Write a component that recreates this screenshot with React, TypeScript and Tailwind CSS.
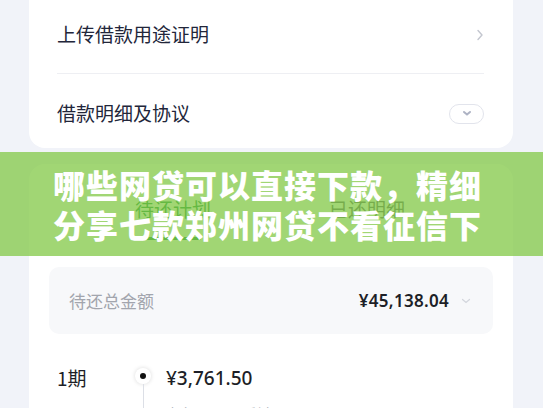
import React from "react";

const font = { fontFamily: '"Noto Sans CJK SC", "Noto Sans", sans-serif' };
const latin = { fontFamily: '"Noto Sans", "Noto Sans CJK SC", sans-serif' };

export default function App() {
  return (
    <div
      className="relative w-[543px] h-[408px] overflow-hidden bg-[#f1f3f9]"
      style={font}
    >
      <div className="flex flex-col pl-[29px] pr-[30px]">
        {/* Card 1 */}
        <div className="bg-white rounded-b-[16px] mt-[-20px] pl-[28px] pr-[29px] pt-[20px]">
          <div className="h-[74px] flex items-center justify-between pb-[4px] border-b border-[#eeeff3]">
            <span className="text-[19px] text-[#22263a]">上传借款用途证明</span>
            <svg width="8" height="12" viewBox="0 0 8 12">
              <path d="M2 1.5 L6 6 L2 10.5" fill="none" stroke="#c3c6cf" strokeWidth="1.4" strokeLinecap="round" strokeLinejoin="round" />
            </svg>
          </div>
          <div className="h-[74px] flex items-center justify-between pt-[5px]">
            <span className="text-[19px] text-[#22263a]">借款明细及协议</span>
            <div className="w-[35px] h-[20px] rounded-full border border-[#e2e4ec] flex items-center justify-center">
              <svg width="10" height="7" viewBox="0 0 10 7">
                <path d="M2 2 L5 4.6 L8 2" fill="none" stroke="#aeb3c4" strokeWidth="2" strokeLinecap="round" strokeLinejoin="round" />
              </svg>
            </div>
          </div>
        </div>

        {/* Card 2 */}
        <div className="bg-white rounded-t-[16px] mt-[16px] h-[300px] flex flex-col">
          <div className="flex h-[81px] pt-[32px]">
            <div className="w-[76px] ml-[106px] flex flex-col items-center">
              <span className="text-[19px] text-[#0c8a3a] leading-[26px] whitespace-nowrap">待还计划</span>
              <div className="w-[56px] h-[3px] rounded-full bg-[#0c8a3a] mt-[15px]" />
            </div>
            <div className="w-[76px] ml-[118px] flex flex-col items-center">
              <span className="text-[19px] text-[#555a60] leading-[26px] whitespace-nowrap">已还明细</span>
            </div>
          </div>
          <div className="mx-[20px] mt-[22px] h-[67px] rounded-[10px] bg-[#f7f8fa] flex items-center justify-between pl-[20px] pr-[22px]">
            <span className="text-[17px] text-[#a2a5ad]">待还总金额</span>
            <div className="flex items-center gap-[12px]">
              <span className="text-[17px] font-semibold text-[#1d1f27] tracking-[0.3px]" style={latin}>¥45,138.04</span>
              <svg width="10" height="6" viewBox="0 0 10 6">
                <path d="M1.5 1.5 L5 4.5 L8.5 1.5" fill="none" stroke="#d3d6dd" strokeWidth="1.2" strokeLinecap="round" />
              </svg>
            </div>
          </div>
          <div className="flex mt-[31px] pl-[28px]">
            <div className="w-[72px] flex flex-col">
              <span className="text-[19px] text-[#1d1f27] leading-[26px]">1期</span>
              <span className="text-[13px] text-[#b0b3bb] mt-[14px] leading-[16px]">04/03/22</span>
            </div>
            <div className="w-[28px] flex flex-col items-center">
              <div className="w-[16px] h-[16px] mt-[3px] rounded-full bg-white shadow-[0_0_4px_rgba(0,0,0,0.15)] flex items-center justify-center">
                <div className="w-[6px] h-[6px] rounded-full bg-[#111]" />
              </div>
              <div className="w-px h-[40px] bg-[#dcdfe6]" />
            </div>
            <div className="flex flex-col pl-[9px]">
              <span className="text-[19px] font-medium text-[#1d1f27] leading-[26px]" style={latin}>¥3,761.50</span>
              <span className="text-[13px] text-[#b0b3bb] mt-[14px] leading-[16px]">本金 3,500.00 利息 261.50</span>
            </div>
          </div>
        </div>
      </div>

      {/* Banner overlay */}
      <div className="absolute left-0 top-[152px] w-[543px] h-[104px] bg-[rgba(130,200,70,0.75)] flex flex-col justify-center pl-[53px]">
        <div className="text-white text-[32px] font-black leading-[40px] tracking-[1px] whitespace-nowrap">哪些网贷可以直接下款，精细</div>
        <div className="text-white text-[32px] font-black leading-[40px] tracking-[1px] whitespace-nowrap">分享七款郑州网贷不看征信下</div>
      </div>
    </div>
  );
}
